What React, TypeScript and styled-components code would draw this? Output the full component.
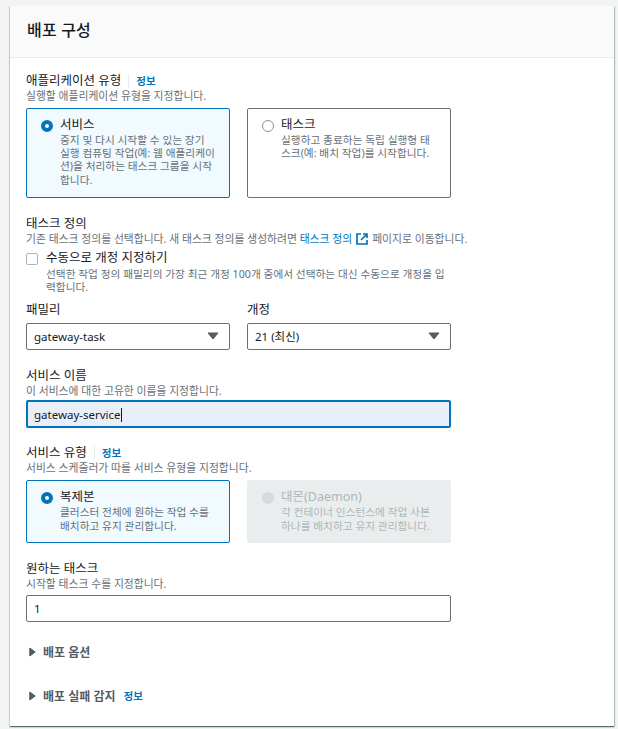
import React from 'react';
import styled, { createGlobalStyle } from 'styled-components';

const GlobalStyle = createGlobalStyle`
    html, body {
        margin: 0;
        padding: 0;
        background: #f2f3f3;
    }

    body {
        font-family: 'Noto Sans', 'Noto Sans CJK KR', sans-serif;
        font-size: 12px;
        color: #16191f;
    }
`;

const Page = styled.div`
    width: 618px;
    height: 729px;
    padding: 6px 4px 0 10px;
    box-sizing: border-box;
    overflow: hidden;
`;

const Card = styled.section`
    height: 720px;
    background: #fff;
    box-shadow: 0 1px 1px 0 rgba(0, 28, 36, 0.5), 1px 1px 1px 0 rgba(0, 28, 36, 0.2), -1px 1px 1px 0 rgba(0, 28, 36, 0.1);
`;

const CardHeader = styled.header`
    height: 52px;
    padding-left: 17px;
    display: flex;
    align-items: center;
    box-sizing: border-box;
    background: #fafafa;
    border-bottom: 1px solid #eaeded;
`;

const Title = styled.h2`
    margin: 0 0 4px;
    font-size: 16px;
    line-height: 24px;
    font-weight: 500;
    letter-spacing: 0.2px;
`;

const CardBody = styled.div`
    width: 425px;
    padding: 14px 0 0 16px;
    display: flex;
    flex-direction: column;
`;

const Field = styled.div<{ $top?: number; $gap?: number }>`
    margin-top: ${({ $top }) => $top ?? 0}px;
    margin-bottom: ${({ $gap }) => $gap ?? 0}px;
`;

const LabelRow = styled.div`
    display: flex;
    align-items: center;
    height: 17px;
    font-size: 12.5px;
    line-height: 17px;
`;

const InfoLink = styled.a`
    color: #0073bb;
    font-size: 10.5px;
    font-weight: 700;
    line-height: 14px;
`;

const LabelInfo = styled(InfoLink)`
    margin-left: 7px;
    padding-left: 7px;
    border-left: 1px solid #eaeded;
`;

const Description = styled.div`
    color: #687078;
    font-size: 10.8px;
    line-height: 14px;
    white-space: nowrap;
`;

const DescriptionLink = styled.a`
    color: #0073bb;
`;

const TileRow = styled.div`
    display: grid;
    grid-template-columns: 204px 204px;
    gap: 17px;
    margin-top: 5px;
`;

const Tile = styled.div<{ $selected?: boolean; $disabled?: boolean; $height: number }>`
    height: ${({ $height }) => $height}px;
    padding: 7px 10px 0 14px;
    box-sizing: border-box;
    display: flex;
    gap: 7px;
    border-radius: 2px;
    border: 1px solid ${({ $selected, $disabled }) => ($selected ? '#0073bb' : $disabled ? '#eaeded' : '#687078')};
    background: ${({ $selected, $disabled }) => ($selected ? '#f1faff' : $disabled ? '#eaeded' : '#fff')};
    color: ${({ $disabled }) => ($disabled ? '#aab7b8' : 'inherit')};
`;

const Radio = styled.span<{ $selected?: boolean; $disabled?: boolean }>`
    flex: none;
    width: 12px;
    height: 12px;
    margin-top: 4px;
    border-radius: 50%;
    box-sizing: border-box;
    border: ${({ $selected, $disabled }) =>
        $selected ? '4px solid #0073bb' : $disabled ? '6px solid #d5dbdb' : '1px solid #879596'};
    background: #fff;
`;

const TileTitle = styled.div`
    font-size: 12.5px;
    line-height: 17px;
`;

const TileText = styled.div<{ $disabled?: boolean }>`
    margin-top: 1px;
    color: ${({ $disabled }) => ($disabled ? '#aab7b8' : '#687078')};
    font-size: 10.7px;
    line-height: 13.2px;
    white-space: nowrap;
`;

const CheckRow = styled.div`
    display: flex;
    gap: 8px;
    margin-top: 3px;
`;

const CheckBox = styled.span`
    flex: none;
    width: 10px;
    height: 10px;
    margin-top: 4px;
    border: 1px solid #aab7b8;
    border-radius: 2px;
    background: #fff;
`;

const CheckText = styled(TileText)`
    margin-top: 2px;
`;

const SelectRow = styled.div`
    display: grid;
    grid-template-columns: 204px 204px;
    gap: 17px;
`;

const Control = styled.div<{ $focused?: boolean }>`
    height: 27px;
    margin-top: 5px;
    padding: 0 10px 1px 7px;
    box-sizing: border-box;
    display: flex;
    align-items: center;
    justify-content: space-between;
    border: 1px solid #687078;
    border-radius: 2px;
    background: #fff;
    font-size: 11.5px;
    ${({ $focused }) =>
        $focused &&
        'height: 28px; margin-top: 2px; border: 2px solid #0073bb; background: #e8eff9; padding: 0 10px 0 6px;'}
`;

const NumberControl = styled(Control)`
    margin-top: 4px;
`;

const Caret = styled.span`
    display: inline-block;
    width: 1px;
    height: 14px;
    background: #16191f;
    vertical-align: -3px;
`;

const Expander = styled.div`
    display: flex;
    align-items: center;
    gap: 7px;
    height: 18px;
    padding-left: 3px;
    color: #545b64;
    font-size: 12px;
    font-weight: 700;
`;

const ExpanderInfo = styled(InfoLink)`
    margin-left: 1px;
`;

const LinkIcon = styled.svg`
    width: 12px;
    height: 12px;
    margin: 0 4px;
    vertical-align: -2px;
    fill: none;
    stroke: #0073bb;
    stroke-width: 1.7;
`;

const ArrowDown = () => (
    <svg width="12" height="8" viewBox="0 0 12 8">
        <path d="M1 1h10L6 7z" fill="#545b64" stroke="#545b64" />
    </svg>
);

const ArrowRight = () => (
    <svg width="7" height="10" viewBox="0 0 7 10">
        <path d="M.8 1l5.4 4-5.4 4z" fill="#545b64" stroke="#545b64" />
    </svg>
);

const ExternalIcon = () => (
    <LinkIcon viewBox="0 0 12 12">
        <path d="M5 1H1v10h10V7" />
        <path d="M7 1h4v4M11 1L5 7" />
    </LinkIcon>
);

export default function App() {
    return (
        <Page>
            <GlobalStyle />
            <Card>
                <CardHeader>
                    <Title>배포 구성</Title>
                </CardHeader>
                <CardBody>
                    <Field $gap={17}>
                        <LabelRow>
                            애플리케이션 유형
                            <LabelInfo>정보</LabelInfo>
                        </LabelRow>
                        <Description>실행할 애플리케이션 유형을 지정합니다.</Description>
                        <TileRow>
                            <Tile $selected $height={90}>
                                <Radio $selected />
                                <div>
                                    <TileTitle>서비스</TileTitle>
                                    <TileText>
                                        중지 및 다시 시작할 수 있는 장기
                                        <br />
                                        실행 컴퓨팅 작업(예: 웹 애플리케이
                                        <br />
                                        션)을 처리하는 태스크 그룹을 시작
                                        <br />
                                        합니다.
                                    </TileText>
                                </div>
                            </Tile>
                            <Tile $height={90}>
                                <Radio />
                                <div>
                                    <TileTitle>태스크</TileTitle>
                                    <TileText>
                                        실행하고 종료하는 독립 실행형 태
                                        <br />
                                        스크(예: 배치 작업)를 시작합니다.
                                    </TileText>
                                </div>
                            </Tile>
                        </TileRow>
                    </Field>
                    <Field $gap={7}>
                        <LabelRow>태스크 정의</LabelRow>
                        <Description>
                            기존 태스크 정의를 선택합니다. 새 태스크 정의를 생성하려면{' '}
                            <DescriptionLink>태스크 정의</DescriptionLink>
                            <ExternalIcon />
                            페이지로 이동합니다.
                        </Description>
                        <CheckRow>
                            <CheckBox />
                            <div>
                                <TileTitle>수동으로 개정 지정하기</TileTitle>
                                <CheckText>
                                    선택한 작업 정의 패밀리의 가장 최근 개정 100개 중에서 선택하는 대신 수동으로 개정을 입
                                    <br />
                                    력합니다.
                                </CheckText>
                            </div>
                        </CheckRow>
                    </Field>
                    <SelectRow>
                        <div>
                            <LabelRow>패밀리</LabelRow>
                            <Control>
                                gateway-task
                                <ArrowDown />
                            </Control>
                        </div>
                        <div>
                            <LabelRow>개정</LabelRow>
                            <Control>
                                21 (최신)
                                <ArrowDown />
                            </Control>
                        </div>
                    </SelectRow>
                    <Field $top={17} $gap={16}>
                        <LabelRow>서비스 이름</LabelRow>
                        <Description>이 서비스에 대한 고유한 이름을 지정합니다.</Description>
                        <Control $focused>
                            <span>
                                gateway-service
                                <Caret />
                            </span>
                        </Control>
                    </Field>
                    <Field $gap={17}>
                        <LabelRow>
                            서비스 유형
                            <LabelInfo>정보</LabelInfo>
                        </LabelRow>
                        <Description>서비스 스케줄러가 따를 서비스 유형을 지정합니다.</Description>
                        <TileRow>
                            <Tile $selected $height={63}>
                                <Radio $selected />
                                <div>
                                    <TileTitle>복제본</TileTitle>
                                    <TileText>
                                        클러스터 전체에 원하는 작업 수를
                                        <br />
                                        배치하고 유지 관리합니다.
                                    </TileText>
                                </div>
                            </Tile>
                            <Tile $disabled $height={63}>
                                <Radio $disabled />
                                <div>
                                    <TileTitle>대몬(Daemon)</TileTitle>
                                    <TileText $disabled>
                                        각 컨테이너 인스턴스에 작업 사본
                                        <br />
                                        하나를 배치하고 유지 관리합니다.
                                    </TileText>
                                </div>
                            </Tile>
                        </TileRow>
                    </Field>
                    <Field $gap={21}>
                        <LabelRow>원하는 태스크</LabelRow>
                        <Description>시작할 태스크 수를 지정합니다.</Description>
                        <NumberControl>1</NumberControl>
                    </Field>
                    <Field $gap={26}>
                        <Expander>
                            <ArrowRight />
                            배포 옵션
                        </Expander>
                    </Field>
                    <Expander>
                        <ArrowRight />
                        배포 실패 감지
                        <ExpanderInfo>정보</ExpanderInfo>
                    </Expander>
                </CardBody>
            </Card>
        </Page>
    );
}
